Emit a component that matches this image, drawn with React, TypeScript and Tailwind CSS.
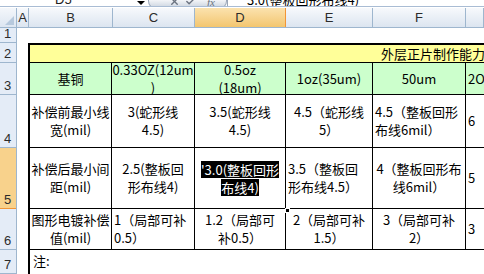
import { Check, X } from "lucide-react";

const cjk = "font-['Noto_Sans_CJK_SC',sans-serif]";
const hdr = "font-['Liberation_Sans',Arial,sans-serif]";

const colHeads = [
  { label: "A", w: "w-[12px]" },
  { label: "B", w: "w-[84px]" },
  { label: "C", w: "w-[82px]" },
  { label: "D", w: "w-[91px]", sel: true },
  { label: "E", w: "w-[87px]" },
  { label: "F", w: "w-[93px]" },
  { label: "", w: "flex-1" },
];

const rowHeads = [
  { n: "1", h: "h-[15px]" },
  { n: "2", h: "h-[20px]" },
  { n: "3", h: "h-[32px]" },
  { n: "4", h: "h-[53px]" },
  { n: "5", h: "h-[61px]", sel: true },
  { n: "6", h: "h-[41px]" },
  { n: "7", h: "flex-1" },
];

type CellProps = {
  lines: string[];
  left?: boolean;
  bg?: string;
};

function Cell({ lines, left, bg = "bg-white" }: CellProps) {
  return (
    <div
      className={`${bg} flex flex-col justify-center overflow-hidden whitespace-nowrap ${
        left ? "items-start pl-[2px]" : "items-center"
      }`}
    >
      {lines.map((l, i) => (
        <span key={i} className="leading-[18px]">
          {l}
        </span>
      ))}
    </div>
  );
}

const G = "bg-[#ccffcc]";

export default function App() {
  return (
    <div className="w-[484px] h-[274px] overflow-hidden bg-white flex flex-col">
      {/* formula bar, only lower part visible */}
      <div className="h-[10px] flex items-stretch overflow-hidden border-b border-[#a9bcd4]">
        <div className={`w-[148px] relative ${hdr} text-[13px] text-[#222]`}>
          <span className="absolute left-[55px] top-[-8px] leading-[16px]">D5</span>
          <span className="absolute left-[137px] top-[1px] w-0 h-0 border-l-[4px] border-r-[4px] border-t-[4px] border-l-transparent border-r-transparent border-t-black" />
        </div>
        <div className="w-[79px] h-[9px] rounded-b-[8px] border border-t-0 border-[#9aa6b8] bg-gradient-to-b from-[#f3f5f8] to-[#c9d2de] flex items-end gap-[5px] pl-[20px] pb-[1px] text-[#6b7380]">
          <X className="w-[11px] h-[11px] -mt-[4px]" strokeWidth={3} />
          <Check className="w-[11px] h-[11px] -mt-[4px]" strokeWidth={3} />
          <span className="font-['Liberation_Serif',serif] italic text-[11px] leading-[10px] ml-[6px]">fx</span>
        </div>
        <div className="flex-1 border-l border-[#9aa6b8] relative">
          <span className={`absolute left-[19px] top-[-8px] leading-[16px] text-[13px] text-black ${cjk}`}>
            3.0(整板回形布线4)
          </span>
        </div>
      </div>
      <div className="h-[1px] bg-white" />

      {/* column headers */}
      <div className={`h-[20px] flex border-b border-[#9eb6ce] ${hdr} text-[13px] text-[#2b2b2b]`}>
        <div className="w-[17px] border-r border-[#9eb6ce] bg-gradient-to-b from-[#f4f7fb] to-[#dde6f1] relative">
          <span className="absolute right-[2px] bottom-[2px] w-0 h-0 border-b-[9px] border-l-[9px] border-b-[#b7c9dd] border-l-transparent" />
        </div>
        {colHeads.map((c, i) => (
          <div
            key={i}
            className={`${c.w} flex items-center justify-center border-r ${
              c.sel
                ? "bg-gradient-to-b from-[#fbe2ae] to-[#f3c66e] border-[#f29536]"
                : "bg-gradient-to-b from-[#f7f9fc] to-[#dce5f0] border-[#9eb6ce]"
            }`}
          >
            {c.label}
          </div>
        ))}
      </div>

      {/* sheet body */}
      <div className="flex-1 flex">
        <div className={`w-[17px] flex flex-col border-r border-[#9eb6ce] ${hdr} text-[13px] text-[#2b2b2b]`}>
          {rowHeads.map((r) => (
            <div
              key={r.n}
              className={`${r.h} shrink-0 flex items-end pl-[4px] pb-[1px] leading-[14px] border-b ${
                r.sel ? "bg-[#f8d28c] border-[#f29536]" : "bg-[#e4ecf7] border-[#9eb6ce]"
              }`}
            >
              {r.n}
            </div>
          ))}
        </div>

        <div className="flex-1 pt-[15px] pl-[11px] overflow-hidden">
          <div className={`relative w-[505px] border-2 border-r-0 border-b-0 border-black ${cjk} text-[13px] text-black`}>
            <div className="grid grid-cols-[81px_82px_90px_86px_92px_60px] grid-rows-[17px_31px_52px_60px_40px_24px] gap-px bg-black">
              <div className="col-span-6 bg-[#ffff99] flex items-center pl-[351px] whitespace-nowrap leading-[17px]">
                外层正片制作能力
              </div>

              <Cell bg={G} lines={["基铜"]} />
              <Cell bg={G} lines={["0.33OZ(12um", ")"]} />
              <Cell bg={G} lines={["0.5oz", "(18um)"]} />
              <Cell bg={G} lines={["1oz(35um)"]} />
              <Cell bg={G} lines={["50um"]} />
              <Cell bg={G} left lines={["2OZ(70um)"]} />

              <Cell lines={["补偿前最小线", "宽(mil)"]} />
              <Cell lines={["3(蛇形线", "4.5)"]} />
              <Cell lines={["3.5(蛇形线", "4.5)"]} />
              <Cell lines={["4.5（蛇形线", "5）"]} />
              <Cell left lines={["4.5（整板回形", "布线6mil）"]} />
              <Cell left lines={["6"]} />

              <Cell lines={["补偿后最小间", "距(mil)"]} />
              <Cell lines={["2.5(整板回", "形布线4)"]} />
              <div className="bg-white flex flex-col items-center justify-center whitespace-nowrap overflow-hidden">
                <span className="leading-[17px] bg-black text-white mb-[1px]">'3.0(整板回形</span>
                <span className="leading-[17px] bg-black text-white">布线4)</span>
              </div>
              <Cell left lines={["3.5（整板回", "形布线4.5）"]} />
              <Cell lines={["4（整板回形布", "线6mil）"]} />
              <Cell left lines={["5"]} />

              <Cell lines={["图形电镀补偿", "值(mil)"]} />
              <Cell left lines={["1（局部可补", "0.5）"]} />
              <Cell lines={["1.2（局部可", "补0.5）"]} />
              <Cell lines={["2（局部可补", "1.5）"]} />
              <Cell lines={["3（局部可补", "2）"]} />
              <Cell left lines={["3"]} />

              <div className="col-span-6 bg-white pl-[3px] pt-[2px] leading-[18px]">注:</div>
            </div>
            <span className="absolute left-[255px] top-[163px] w-[5px] h-[5px] bg-black border border-white" />
          </div>
        </div>
      </div>
    </div>
  );
}
